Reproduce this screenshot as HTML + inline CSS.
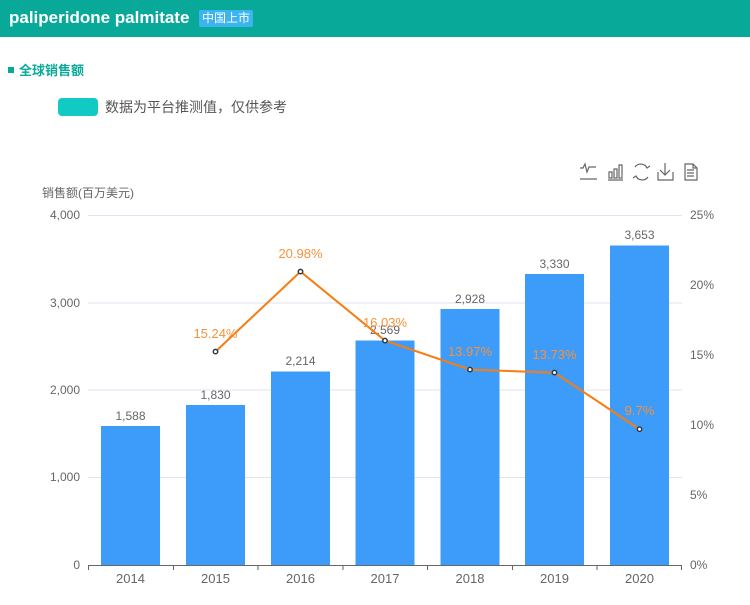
<!DOCTYPE html>
<html><head><meta charset="utf-8"><style>
body{margin:0;width:750px;height:605px;background:#fff;font-family:"Liberation Sans","Noto Sans CJK SC",sans-serif;overflow:hidden;position:relative}
.hd{height:37px;background:#09a99a;position:relative}
.hd .t{position:absolute;left:9px;top:8px;color:#fff;font-weight:bold;font-size:17px}
.hd .tag{position:absolute;left:199px;top:10px;background:#3cb4f0;color:#fff;font-size:12px;padding:0 3px;height:17px;line-height:17px;border-radius:2px}
.sec{position:absolute;left:8px;top:60px;color:#09a99a;font-weight:bold;font-size:13px}
.sec i{display:inline-block;width:6px;height:6px;background:#09a99a;margin-right:5px;vertical-align:2px}
.lg{position:absolute;left:58px;top:98px;width:40px;height:18px;background:#12cac4;border-radius:4px}
.lgt{position:absolute;left:105px;top:97px;font-size:14px;color:#555}
</style></head><body>
<div class="hd"><span class="t">paliperidone palmitate</span><span class="tag">中国上市</span></div>
<div class="sec"><i></i>全球销售额</div>
<div class="lg"></div><div class="lgt">数据为平台推测值，仅供参考</div>
<svg width="750" height="605" style="position:absolute;left:0;top:0" font-family="Liberation Sans,Noto Sans CJK SC,sans-serif">
<g stroke="#666" stroke-width="1.2" fill="none">
<path d="M580 168h3l2-4 2 8 2-5h7M580 179h17"/>
<path d="M609 172h3v6h-3zM614 169h3v9h-3zM619 165h3v13h-3zM608 180h15"/>
<path d="M647 168a7 7 0 0 0-12-1M636 176a7 7 0 0 0 12 1M645 165l2 3 3-2M638 179l-2-3-3 2"/>
<path d="M665 163v12M660 170l5 5 5-5M658 172v8h15v-8"/>
<path d="M685 164h8l4 4v12h-12zM693 164v4h4M687 170h7M687 173h7M687 176h7"/>
</g>
<text x="42" y="197" font-size="12" fill="#666">销售额(百万美元)</text>
<g stroke="#e0e3f0" stroke-width="1">
<line x1="88" y1="215.5" x2="682" y2="215.5"/><line x1="88" y1="303" x2="682" y2="303"/><line x1="88" y1="390" x2="682" y2="390"/><line x1="88" y1="477.5" x2="682" y2="477.5"/>
</g>
<g font-size="12" fill="#666" text-anchor="end">
<text x="80" y="219">4,000</text><text x="80" y="307">3,000</text><text x="80" y="394">2,000</text><text x="80" y="481">1,000</text><text x="80" y="569">0</text>
</g>
<g font-size="12" fill="#666">
<text x="690" y="219">25%</text><text x="690" y="289">20%</text><text x="690" y="359">15%</text><text x="690" y="429">10%</text><text x="690" y="499">5%</text><text x="690" y="569">0%</text>
</g>
<g fill="#3d9cfa">
<rect x="101" y="426" width="59" height="139"/><rect x="186" y="405" width="59" height="160"/><rect x="271" y="371.5" width="59" height="193.5"/><rect x="355.5" y="340.5" width="59" height="224.5"/><rect x="440.5" y="309" width="59" height="256"/><rect x="525" y="274" width="59" height="291"/><rect x="610" y="245.5" width="59" height="319.5"/>
</g>
<g font-size="12" fill="#666" text-anchor="middle">
<text x="130.5" y="420">1,588</text><text x="215.5" y="399">1,830</text><text x="300.5" y="365">2,214</text><text x="385" y="334">2,569</text><text x="470" y="303">2,928</text><text x="554.5" y="268">3,330</text><text x="639.5" y="239">3,653</text>
</g>
<path d="M88 565.5H682M88.5 565v5M173.5 565v5M258 565v5M343 565v5M427.5 565v5M512.5 565v5M597 565v5M681.5 565v5" stroke="#666" fill="none"/>
<g font-size="13" fill="#666" text-anchor="middle">
<text x="130.5" y="583">2014</text><text x="215.5" y="583">2015</text><text x="300.5" y="583">2016</text><text x="385" y="583">2017</text><text x="470" y="583">2018</text><text x="554.5" y="583">2019</text><text x="639.5" y="583">2020</text>
</g>
<polyline points="215.5,351.6 300.5,271.6 385,340.6 470,369.6 554.5,372.6 639.5,429.2" fill="none" stroke="#f97c10" stroke-width="2"/>
<g fill="#fff" stroke="#2b3a4a" stroke-width="1.5">
<circle cx="215.5" cy="351.6" r="2.2"/><circle cx="300.5" cy="271.6" r="2.2"/><circle cx="385" cy="340.6" r="2.2"/><circle cx="470" cy="369.6" r="2.2"/><circle cx="554.5" cy="372.6" r="2.2"/><circle cx="639.5" cy="429.2" r="2.2"/>
</g>
<g font-size="13" fill="#f7913a" text-anchor="middle">
<text x="215.5" y="338">15.24%</text><text x="300.5" y="258">20.98%</text><text x="385" y="327">16.03%</text><text x="470" y="356">13.97%</text><text x="554.5" y="359">13.73%</text><text x="639.5" y="415">9.7%</text>
</g>
</svg>
</body></html>
